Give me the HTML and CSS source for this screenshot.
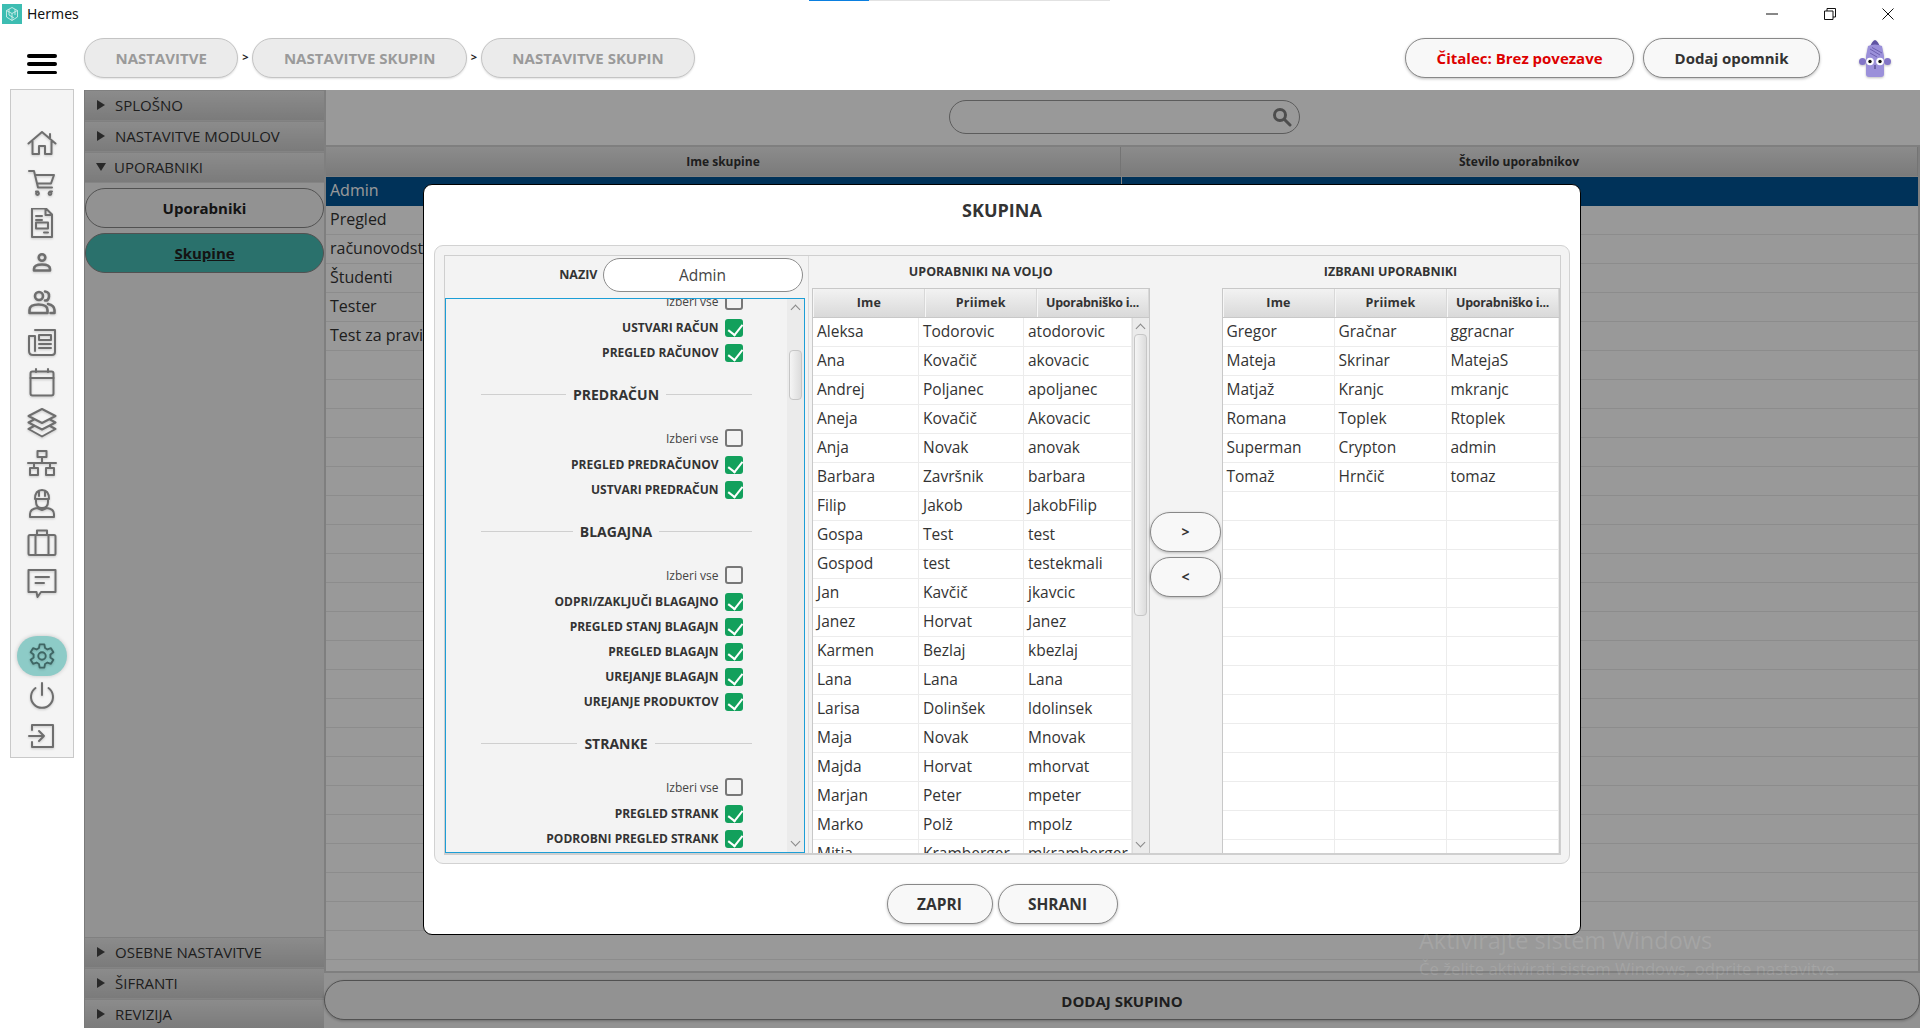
FILE: index.html
```html
<!DOCTYPE html>
<html lang="sl">
<head>
<meta charset="utf-8">
<title>Hermes</title>
<link rel="stylesheet" href="styles.css">
</head>
<body>
<div class="app">
  <div class="progress"><span class="progress-fill"></span></div>
  <header class="titlebar">
    <svg class="logo" viewBox="0 0 20 20"><rect width="20" height="20" fill="#3dbdb2"/><path d="M10 3.500 15.500 6.500V13L10 16.500 4.500 13V6.500ZM4.500 6.500 10 9.500 15.500 6.500M10 9.500V16.500M7 5V11L12 14M13 5V11" fill="none" stroke="#cfeeea" stroke-width=".9"/></svg>
    <span class="app-name">Hermes</span>
    <div class="window-controls">
      <svg viewBox="0 0 12 12"><path d="M0 6H12" stroke="#111" fill="none"/></svg>
      <svg viewBox="0 0 12 12"><path d="M.5 3H9V11.500H.5ZM3 3V.5H11.500V9H9" stroke="#111" fill="none"/></svg>
      <svg viewBox="0 0 12 12"><path d="M.5.5 11.500 11.500M11.500.5.5 11.500" stroke="#111" fill="none"/></svg>
    </div>
  </header>
  <header class="topbar">
    <button class="hamburger" aria-label="Meni"><i></i><i></i><i></i></button>
    <nav class="crumbs">
      <span class="pill crumb">NASTAVITVE</span><span class="sep">&gt;</span>
      <span class="pill crumb">NASTAVITVE SKUPIN</span><span class="sep">&gt;</span>
      <span class="pill crumb">NASTAVITVE SKUPIN</span>
    </nav>
    <div class="top-actions">
      <span class="pill action danger">Čitalec: Brez povezave</span>
      <span class="pill action">Dodaj opomnik</span>
      <svg class="mascot" viewBox="0 0 32 37">
        <path d="M11 7Q13 1 16 0 19 1 21 7Z" fill="#5f53a3"/>
        <circle cx="3.500" cy="21.500" r="3.500" fill="#8275c7"/><circle cx="28.500" cy="21.500" r="3.500" fill="#8275c7"/>
        <path d="M9 6Q16 3 23 6L25 16V34Q25 37 22 37H10Q7 37 7 34V16Z" fill="#9b90da"/>
        <path d="M11 9 21 15M13 7.500 23 13M11 13 18 17" stroke="#6d60b0" fill="none"/>
        <circle cx="11" cy="21.500" r="3.800" fill="#fff"/><circle cx="21" cy="21.500" r="3.800" fill="#fff"/>
        <circle cx="11" cy="21.500" r="1.700" fill="#111"/><circle cx="21" cy="21.500" r="1.700" fill="#111"/>
        <path d="M16 25V29" stroke="#3a3270" stroke-width="1"/>
      </svg>
    </div>
  </header>
  <div class="main">
    <nav class="rail-wrap">
      <div class="rail">
        <a class="rail-item"><svg class="icon" viewBox="0 0 30 30"><path d="M1.500 15.500 15 4 28.500 15.500M5.500 13V26H12V18H18V26H24.500V13M23 6V10"/></svg></a>
        <a class="rail-item"><svg class="icon" viewBox="0 0 30 30"><path d="M2 3H7L11 19.500H25M8 7H27L24 15.500H10M9 23.500H11M23 23.500H25" /><circle cx="10.500" cy="25.500" r="1.400"/><circle cx="23" cy="25.500" r="1.400"/></svg></a>
        <a class="rail-item"><svg class="icon" viewBox="0 0 30 30"><path d="M5 .5H19L25 6.500V29H5ZM18.500 1V7H25M9 8H15M9 12H15M9 14.500H21V20.500H9ZM17 24.500H21"/></svg></a>
        <a class="rail-item"><svg class="icon thick" viewBox="0 0 30 30"><circle cx="15" cy="9.500" r="3.300"/><path d="M7 21Q7 16.500 15 16.500T23 21V22.500H7Z"/></svg></a>
        <a class="rail-item"><svg class="icon thick" viewBox="0 0 30 30"><circle cx="12" cy="8" r="4"/><path d="M2.500 25V22Q2.500 16.500 11.500 16.500T20.500 22V25ZM18 3.500Q22.500 4 22 8.500T18 12.500M21 16Q27.500 17.500 27.500 22V25H23.500"/></svg></a>
        <a class="rail-item"><svg class="icon" viewBox="0 0 30 30"><path d="M8 2H28V24Q28 27 25 27H6Q2 27 2 23V8H8V23M12 7H24V12H12ZM12 16H24M12 20H24"/></svg></a>
        <a class="rail-item"><svg class="icon" viewBox="0 0 30 30"><rect x="3.500" y="3.500" width="23" height="24" rx="2"/><path d="M3.500 10H26.500M9 1V4M21 1V4"/></svg></a>
        <a class="rail-item"><svg class="icon" viewBox="0 0 30 30"><path d="M15 1 28.500 8 15 15 1.500 8ZM7 11.500 1.500 14.500 15 21.500 28.500 14.500 23 11.500M7 18 1.500 21 15 28.500 28.500 21 23 18"/></svg></a>
        <a class="rail-item"><svg class="icon" viewBox="0 0 30 30"><path d="M10.500 3H19.500V9H10.500ZM15 9V15M1 15H29M7 15V20M23 15V20M3 20H11V27H3ZM19 20H27V27H19Z"/></svg></a>
        <a class="rail-item"><svg class="icon" viewBox="0 0 30 30"><path d="M8 11Q8 2 15 2T22 11ZM12 3V8M18 3V8M9 11V14Q9 20 15 20T21 14V11M3 29V26Q3 21 10 20L15 22 20 20Q27 21 27 26V29Z"/></svg></a>
        <a class="rail-item"><svg class="icon" viewBox="0 0 30 30"><rect x="1.500" y="7" width="27" height="20" rx="1.500"/><path d="M10 7V2.500H20V7M8.500 7V27M21.500 7V27"/></svg></a>
        <a class="rail-item"><svg class="icon" viewBox="0 0 30 30"><path d="M1.500 2H28.500V24H14L10.500 29 9.500 24H1.500ZM8.500 9H22M8.500 15H17"/></svg></a>
        <a class="rail-item gear"><svg class="icon" viewBox="0 0 30 30"><circle cx="15" cy="15" r="4"/><path d="M12.500 2.500H17.500L18.300 6.500 20.800 8 24.600 6.600 27.200 11 24 13.500V16.500L27.200 19 24.600 23.400 20.800 22 18.300 23.500 17.500 27.500H12.500L11.700 23.500 9.200 22 5.400 23.400 2.800 19 6 16.500V13.500L2.800 11 5.400 6.600 9.200 8 11.700 6.500Z"/></svg></a>
        <a class="rail-item"><svg class="icon" viewBox="0 0 30 30"><path d="M15 2V14M8.500 7A11 11 0 1 0 21.500 7"/></svg></a>
        <a class="rail-item"><svg class="icon" viewBox="0 0 30 30"><path d="M5 9V4H26V26H5V21M2 15H17M12 10 17 15 12 20"/></svg></a>
      </div>
    </nav>
    <section class="workspace">
      <aside class="accordion">
        <div class="acc-title"><i class="tri"></i>SPLOŠNO</div>
        <div class="acc-title"><i class="tri"></i>NASTAVITVE MODULOV</div>
        <div class="acc-title"><i class="tri open"></i>UPORABNIKI</div>
        <div class="acc-body">
          <span class="pill side-pill">Uporabniki</span>
          <span class="pill side-pill active">Skupine</span>
        </div>
        <div class="acc-title"><i class="tri"></i>OSEBNE NASTAVITVE</div>
        <div class="acc-title"><i class="tri"></i>ŠIFRANTI</div>
        <div class="acc-title"><i class="tri"></i>REVIZIJA</div>
      </aside>
      <div class="content">
        <div class="search-row">
          <div class="search">
            <svg viewBox="0 0 20 20"><circle cx="8" cy="8" r="5.500"/><path d="M12.500 12.500 18 18"/></svg>
          </div>
        </div>
        <div class="groups">
          <div class="groups-head"><span>Ime skupine</span><span>Število uporabnikov</span></div>
          <div class="groups-body">
            <div class="groups-row selected">Admin</div>
            <div class="groups-row">Pregled</div>
            <div class="groups-row">računovodstvo</div>
            <div class="groups-row">Študenti</div>
            <div class="groups-row">Tester</div>
            <div class="groups-row">Test za pravice</div>
          </div>
        </div>
        <div class="add-row"><span class="pill add-btn">DODAJ SKUPINO</span></div>
      </div>
      <div class="dim"></div>
      <div class="modal">
        <h2 class="modal-title">SKUPINA</h2>
        <div class="modal-box">
          <div class="modal-inner">
            <div class="perm-col">
              <div class="name-row"><label class="name-label">NAZIV</label><span class="name-input">Admin</span></div>
              <div class="perm-list">
                <div class="perm-scroll">
                  <div class="perm-inner">
                    <div class="perm all"><span>Izberi vse</span><i class="cb"></i></div>
                    <div class="perm"><span>USTVARI RAČUN</span><i class="cb on"></i></div>
                    <div class="perm"><span>PREGLED RAČUNOV</span><i class="cb on"></i></div>
                    <div class="perm-head"><span>PREDRAČUN</span></div>
                    <div class="perm all"><span>Izberi vse</span><i class="cb"></i></div>
                    <div class="perm"><span>PREGLED PREDRAČUNOV</span><i class="cb on"></i></div>
                    <div class="perm"><span>USTVARI PREDRAČUN</span><i class="cb on"></i></div>
                    <div class="perm-head"><span>BLAGAJNA</span></div>
                    <div class="perm all"><span>Izberi vse</span><i class="cb"></i></div>
                    <div class="perm"><span>ODPRI/ZAKLJUČI BLAGAJNO</span><i class="cb on"></i></div>
                    <div class="perm"><span>PREGLED STANJ BLAGAJN</span><i class="cb on"></i></div>
                    <div class="perm"><span>PREGLED BLAGAJN</span><i class="cb on"></i></div>
                    <div class="perm"><span>UREJANJE BLAGAJN</span><i class="cb on"></i></div>
                    <div class="perm"><span>UREJANJE PRODUKTOV</span><i class="cb on"></i></div>
                    <div class="perm-head"><span>STRANKE</span></div>
                    <div class="perm all"><span>Izberi vse</span><i class="cb"></i></div>
                    <div class="perm"><span>PREGLED STRANK</span><i class="cb on"></i></div>
                    <div class="perm"><span>PODROBNI PREGLED STRANK</span><i class="cb on"></i></div>
                  </div>
                </div>
                <div class="vbar perm-bar"><i class="chev up"></i><b class="thumb"></b><i class="chev down"></i></div>
              </div>
            </div>
            <div class="pool">
              <div class="col-title">UPORABNIKI NA VOLJO</div>
              <div class="utable">
                <div class="uhead"><span>Ime</span><span>Priimek</span><span>Uporabniško i...</span></div>
                <div class="ubody-wrap">
                  <div class="ubody with-bar">
                    <div class="urow"><span>Aleksa</span><span>Todorovic</span><span>atodorovic</span></div>
                    <div class="urow"><span>Ana</span><span>Kovačič</span><span>akovacic</span></div>
                    <div class="urow"><span>Andrej</span><span>Poljanec</span><span>apoljanec</span></div>
                    <div class="urow"><span>Aneja</span><span>Kovačič</span><span>Akovacic</span></div>
                    <div class="urow"><span>Anja</span><span>Novak</span><span>anovak</span></div>
                    <div class="urow"><span>Barbara</span><span>Završnik</span><span>barbara</span></div>
                    <div class="urow"><span>Filip</span><span>Jakob</span><span>JakobFilip</span></div>
                    <div class="urow"><span>Gospa</span><span>Test</span><span>test</span></div>
                    <div class="urow"><span>Gospod</span><span>test</span><span>testekmali</span></div>
                    <div class="urow"><span>Jan</span><span>Kavčič</span><span>jkavcic</span></div>
                    <div class="urow"><span>Janez</span><span>Horvat</span><span>Janez</span></div>
                    <div class="urow"><span>Karmen</span><span>Bezlaj</span><span>kbezlaj</span></div>
                    <div class="urow"><span>Lana</span><span>Lana</span><span>Lana</span></div>
                    <div class="urow"><span>Larisa</span><span>Dolinšek</span><span>ldolinsek</span></div>
                    <div class="urow"><span>Maja</span><span>Novak</span><span>Mnovak</span></div>
                    <div class="urow"><span>Majda</span><span>Horvat</span><span>mhorvat</span></div>
                    <div class="urow"><span>Marjan</span><span>Peter</span><span>mpeter</span></div>
                    <div class="urow"><span>Marko</span><span>Polž</span><span>mpolz</span></div>
                    <div class="urow"><span>Mitja</span><span>Kramberger</span><span>mkramberger</span></div>
                  </div>
                  <div class="vbar table-bar"><i class="chev up"></i><b class="thumb"></b><i class="chev down"></i></div>
                </div>
              </div>
            </div>
            <div class="movers">
              <span class="pill move">&gt;</span>
              <span class="pill move">&lt;</span>
            </div>
            <div class="chosen">
              <div class="col-title">IZBRANI UPORABNIKI</div>
              <div class="utable">
                <div class="uhead"><span>Ime</span><span>Priimek</span><span>Uporabniško i...</span></div>
                <div class="ubody-wrap">
                  <div class="ubody equal">
                    <div class="urow"><span>Gregor</span><span>Gračnar</span><span>ggracnar</span></div>
                    <div class="urow"><span>Mateja</span><span>Skrinar</span><span>MatejaS</span></div>
                    <div class="urow"><span>Matjaž</span><span>Kranjc</span><span>mkranjc</span></div>
                    <div class="urow"><span>Romana</span><span>Toplek</span><span>Rtoplek</span></div>
                    <div class="urow"><span>Superman</span><span>Crypton</span><span>admin</span></div>
                    <div class="urow"><span>Tomaž</span><span>Hrnčič</span><span>tomaz</span></div>
                    <div class="urow"><span></span><span></span><span></span></div>
                    <div class="urow"><span></span><span></span><span></span></div>
                    <div class="urow"><span></span><span></span><span></span></div>
                    <div class="urow"><span></span><span></span><span></span></div>
                    <div class="urow"><span></span><span></span><span></span></div>
                    <div class="urow"><span></span><span></span><span></span></div>
                    <div class="urow"><span></span><span></span><span></span></div>
                    <div class="urow"><span></span><span></span><span></span></div>
                    <div class="urow"><span></span><span></span><span></span></div>
                    <div class="urow"><span></span><span></span><span></span></div>
                    <div class="urow"><span></span><span></span><span></span></div>
                    <div class="urow"><span></span><span></span><span></span></div>
                    <div class="urow"><span></span><span></span><span></span></div>
                  </div>
                </div>
              </div>
            </div>
          </div>
        </div>
        <div class="modal-actions">
          <span class="pill modal-btn">ZAPRI</span>
          <span class="pill modal-btn">SHRANI</span>
        </div>
      </div>
    </section>
  </div>
  <div class="watermark">
    <div class="wm-big">Aktivirajte sistem Windows</div>
    <div class="wm-small">Če želite aktivirati sistem Windows, odprite nastavitve.</div>
  </div>
</div>
</body>
</html>
```
FILE: styles.css
```css
* { box-sizing: border-box; }
html, body { margin: 0; height: 100%; }
body { font-family: "Open Sans", "Noto Sans", sans-serif; color: #333; background: #fff; overflow: hidden; }
.app { position: relative; width: 1920px; height: 1028px; display: flex; flex-direction: column; overflow: hidden; }

.progress { position: absolute; left: 809px; top: 0; width: 301px; height: 1px; background: #e2e2e2; }
.progress-fill { display: block; width: 60px; height: 100%; background: #0a7fe0; }

.titlebar { height: 32px; flex: none; display: flex; align-items: flex-start; padding: 4px 0 0 2px; }
.logo { width: 20px; height: 20px; }
.app-name { margin-left: 5px; font-family: "Noto Sans", sans-serif; font-size: 14px; line-height: 20px; color: #111; }
.window-controls { margin-left: auto; display: flex; gap: 46px; padding: 4px 26px 0 0; }
.window-controls svg { width: 12px; height: 12px; display: block; }

.topbar { height: 58px; flex: none; display: flex; align-items: flex-start; padding: 6px 29px 0 27px; }
.hamburger { width: 30px; height: 20px; margin: 16px 27px 0 0; padding: 0; border: 0; background: none; display: flex; flex-direction: column; justify-content: space-between; }
.hamburger i { display: block; height: 3.500px; border-radius: 2px; background: #000; }
.crumbs { display: flex; align-items: flex-start; }
.sep { width: 14px; text-align: center; font-size: 11px; font-weight: 700; line-height: 40px; color: #222; margin-top: -1px; }
.top-actions { margin-left: auto; display: flex; align-items: flex-start; gap: 9px; }
.mascot { width: 32px; height: 37px; margin: 2px 0 0 30px; filter: drop-shadow(0 1px 1px rgba(0,0,0,.25)); }

.pill { display: inline-flex; align-items: center; justify-content: center; height: 40px; border-radius: 20px; border: 1.500px solid #888; background: #f8f8f8; font-weight: 700; font-size: 15px; color: #333; white-space: nowrap; box-shadow: 0 1px 3px rgba(0,0,0,.25); }
.crumb { padding: 0 30.500px; background: #ebebeb; border-color: #c4c4c4; color: #9a9a9a; font-size: 15px; box-shadow: 0 1px 2px rgba(0,0,0,.12); }
.action { padding: 0 30.500px; }
.danger { color: #dd0000; }

.main { flex: 1; min-height: 0; display: flex; }
.rail-wrap { width: 84px; flex: none; padding-left: 10px; }
.rail { width: 64px; height: 669px; margin-top: -1px; padding-top: 33px; display: flex; flex-direction: column; align-items: center; background: #f4f4f4; border: 1px solid #c9c9c9; }
.rail-item { width: 50px; height: 40px; flex: none; display: flex; align-items: center; justify-content: center; border-radius: 20px; }
.icon { width: 30px; height: 30px; fill: none; stroke: #6e6e6e; stroke-width: 2; stroke-linejoin: round; stroke-linecap: round; filter: drop-shadow(0 1px 1px rgba(0,0,0,.18)); }
.icon.thick { stroke-width: 2.600; }
.gear { margin-top: 33px; background: #8dcbc7; box-shadow: 0 0 4px rgba(0,0,0,.2); }
.gear .icon { stroke: #3f6664; width: 28px; height: 28px; }

.workspace { flex: 1; min-width: 0; position: relative; display: flex; }
.accordion { width: 240px; flex: none; display: flex; flex-direction: column; margin-bottom: -2px; background: #f4f4f4; border-left: 1px solid #ccc; }
.acc-title { height: 31px; flex: none; display: flex; align-items: center; padding: 0 0 2px 12px; background: linear-gradient(#e9e9e9, #cdcdcd); border-bottom: 1px solid #dcdcdc; border-top: 1px solid #d6d6d6; font-size: 15px; color: #333; }
.tri { width: 0; height: 0; margin-right: 10px; border-left: 8px solid #444; border-top: 5.500px solid transparent; border-bottom: 5.500px solid transparent; }
.tri.open { border-left: 5.500px solid transparent; border-right: 5.500px solid transparent; border-top: 8px solid #444; border-bottom: 0; margin-left: -1px; margin-right: 8px; }
.acc-body { flex: 1; display: flex; flex-direction: column; gap: 5px; padding: 5px 0 0 0; }
.side-pill { width: 239px; font-size: 15px; background: #f4f4f4; box-shadow: none; color: #222; }
.side-pill.active { background: #47bdb4; text-decoration: underline; color: #222; }

.content { flex: 1; min-width: 0; display: flex; flex-direction: column; background: #fff; border-left: 2px solid #d4d4d4; }
.search-row { height: 55px; flex: none; padding: 10px 0 0 623px; }
.search { width: 351px; height: 34px; display: flex; align-items: center; justify-content: flex-end; padding-right: 7px; border-radius: 17px; border: 1.500px solid #999; background: #fff; }
.search svg { width: 20px; height: 20px; fill: none; stroke: #808080; stroke-width: 3; stroke-linecap: round; }
.groups { flex: 1; min-height: 0; display: flex; flex-direction: column; border-top: 2px solid #d4d4d4; border-right: 2px solid #d4d4d4; border-bottom: 2px solid #d4d4d4; }
.groups-head { height: 30px; flex: none; display: grid; grid-template-columns: 795px 1fr; background: linear-gradient(#e9e9e9, #cccccc); border-bottom: 1px solid #d8d8d8; }
.groups-head span { display: flex; align-items: center; justify-content: center; font-size: 12px; font-weight: 700; color: #333; border-right: 1px solid #c2c2c2; }
.groups-body { flex: 1; background: repeating-linear-gradient(#fff 0, #fff 28px, #e9e9e9 28px, #e9e9e9 29px); }
.groups-row { height: 29px; padding-left: 4px; line-height: 27px; font-size: 16px; color: #333; border-bottom: 1px solid #e9e9e9; }
.groups-row.selected { background: linear-gradient(90deg, #005495 795px, #ddd 795px, #ddd 796px, #005495 796px); color: #fff; border-bottom-color: #005495; }
.add-row { height: 55px; flex: none; padding-top: 7px; background: #f4f4f4; margin-left: -2px; }
.add-btn { width: 100%; padding-top: 2px; background: #f4f4f4; color: #333; font-size: 15px; }

.dim { position: absolute; inset: 0; background: rgba(0,0,0,.4); }

.modal { position: absolute; left: 339px; top: 94px; width: 1158px; height: 751px; display: flex; flex-direction: column; background: #fff; border: 1.500px solid #000; border-radius: 9px; }
.modal-title { margin: 0; height: 60px; flex: none; text-align: center; font-size: 18px; font-weight: 700; line-height: 50px; color: #333; }
.modal-box { height: 619px; flex: none; margin: 0 10px; padding: 8.500px; background: #f3f3f3; border: 1.500px solid #d2d2d2; border-radius: 9px; }
.modal-inner { height: 100%; display: flex; border: 1.500px solid #cfcfcf; border-bottom-width: 2px; }
.perm-col { width: 360px; flex: none; display: flex; flex-direction: column; }
.name-row { height: 42px; flex: none; display: flex; align-items: center; justify-content: flex-end; padding: 0 2px 4px 0; }
.name-label { font-size: 12.500px; font-weight: 700; color: #333; margin-right: 5px; }
.name-input { width: 200px; height: 34px; display: flex; align-items: center; justify-content: center; font-size: 15.500px; background: #fff; border: 1.500px solid #8c8c8c; border-radius: 17px; color: #444; }
.perm-list { flex: 1; min-height: 0; display: flex; border: 1.500px solid #1c9ed6; }
.perm-scroll { flex: 1; min-width: 0; overflow: hidden; }
.perm-inner { margin-top: -10px; padding-right: 44px; }
.perm { height: 25px; display: flex; align-items: center; justify-content: flex-end; gap: 6px; font-size: 12px; font-weight: 700; color: #333; white-space: nowrap; }
.perm.all { font-weight: 400; margin-bottom: 1.500px; color: #444; }
.perm-head { height: 20px; margin: 19px -9px 21.500px 35px; display: flex; align-items: center; gap: 7px; font-size: 14px; font-weight: 700; color: #333; }
.perm-head::before, .perm-head::after { content: ""; flex: 1; height: 1px; background: #cfcfcf; }
.cb { position: relative; display: block; width: 18px; height: 18px; flex: none; border: 2px solid #777; border-radius: 3px; background: #f3f3f3; }
.cb.on { border: 0; background: #12a05c; }
.cb.on::after { content: ""; position: absolute; left: 6px; top: 2px; width: 6.500px; height: 12px; border-right: 2px solid #fff; border-bottom: 2px solid #fff; transform: rotate(38deg); }

.vbar { flex: none; display: flex; flex-direction: column; align-items: center; background: #ebebeb; }
.perm-bar { width: 17px; }
.perm-bar .thumb { height: 50px; margin-top: 37px; }
.table-bar { width: 17px; border-left: 1px solid #ddd; }
.table-bar .thumb { height: 282px; margin-top: 2px; }
.thumb { display: block; width: 13px; background: linear-gradient(90deg, #f5f5f5, #dcdcdc); border: 1px solid #c6c6c6; border-radius: 4px; flex: none; }
.chev { display: block; flex: none; width: 7px; height: 7px; border-left: 1.200px solid #888; border-top: 1.200px solid #888; }
.chev.up { margin-top: 7px; transform: rotate(45deg); }
.chev.down { margin-top: auto; margin-bottom: 7px; transform: rotate(225deg); }

.pool { width: 342px; flex: none; margin-left: 3px; padding-left: 3.500px; border-left: 1.500px solid #dcdcdc; display: flex; flex-direction: column; }
.chosen { flex: 1; min-width: 0; display: flex; flex-direction: column; }
.col-title { height: 32px; flex: none; display: flex; align-items: center; justify-content: center; font-size: 12.500px; font-weight: 700; color: #333; }
.utable { flex: 1; min-height: 0; display: flex; flex-direction: column; background: #fff; border: 1px solid #c8c8c8; border-bottom: 0; }
.uhead { height: 29px; flex: none; display: grid; grid-template-columns: repeat(3, 1fr); border-bottom: 1px solid #c8c8c8; }
.uhead span { display: flex; align-items: center; justify-content: center; font-size: 12.500px; font-weight: 700; letter-spacing: .2px; color: #333; background: linear-gradient(#f2f2f2, #d9d9d9); border-right: 1px solid #d8d8d8; border-left: 1px solid #f6f6f6; }
.uhead span:last-child { letter-spacing: -.3px; }
.ubody-wrap { flex: 1; min-height: 0; display: flex; }
.ubody { flex: 1; min-width: 0; overflow: hidden; }
.urow { height: 29px; display: grid; border-bottom: 1px solid #ececec; font-size: 15.500px; color: #333; }
.with-bar .urow { grid-template-columns: 106px 105px 1fr; }
.equal .urow { grid-template-columns: 112px 112px 1fr; }
.urow span { padding-left: 4px; line-height: 27px; border-right: 1px solid #ececec; white-space: nowrap; overflow: hidden; }

.movers { width: 72px; flex: none; display: flex; flex-direction: column; align-items: center; gap: 5px; padding-top: 256px; }
.move { width: 71px; font-size: 14px; }

.modal-actions { flex: 1; display: flex; justify-content: center; gap: 5px; padding-top: 20px; }
.modal-btn { font-size: 15.500px; }
.modal-btn:first-child { width: 106px; }
.modal-btn:last-child { width: 120px; }

.watermark { position: absolute; left: 1419px; top: 924px; color: rgba(255,255,255,.12); pointer-events: none; white-space: nowrap; }
.wm-big { font-size: 23.500px; line-height: 32px; }
.wm-small { font-size: 16.700px; line-height: 20px; margin-top: 3px; }
```
